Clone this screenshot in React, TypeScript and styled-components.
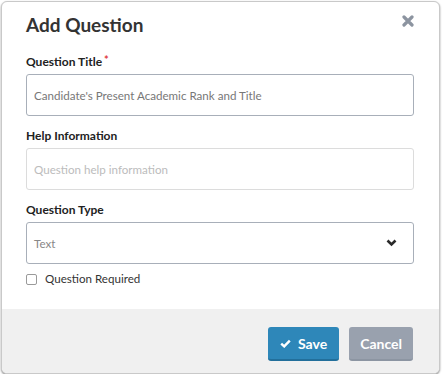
import React from 'react';
import styled, { createGlobalStyle } from 'styled-components';

const GlobalStyle = createGlobalStyle`
  html, body {
    margin: 0;
    padding: 0;
    background: #fff;
  }
  body {
    font-family: Lato, "Liberation Sans", Arial, sans-serif;
    color: #333;
  }
`;

const Dialog = styled.div`
  box-sizing: border-box;
  margin: 1px 0 0 1px;
  width: 439px;
  height: 373px;
  border: 1px solid #c9c9c9;
  border-radius: 6px;
  box-shadow: 0 1px 2px rgba(0, 0, 0, 0.45);
  background: #fff;
  display: flex;
  flex-direction: column;
  overflow: hidden;
`;

const Header = styled.div`
  display: flex;
  justify-content: space-between;
  align-items: flex-start;
  padding: 11px 25px 0 24px;
`;

const Title = styled.h2`
  margin: 0;
  font-size: 19px;
  line-height: 23px;
  font-weight: 700;
  color: #333;
`;

const CloseButton = styled.button`
  border: none;
  background: none;
  padding: 0;
  margin-top: 2px;
  width: 12px;
  height: 12px;
  display: flex;
  cursor: pointer;
`;

const Body = styled.div`
  padding: 18px 25px 0 24px;
  display: flex;
  flex-direction: column;
`;

const Field = styled.div`
  display: flex;
  flex-direction: column;
  margin-bottom: 12px;
`;

const Label = styled.label`
  font-size: 12px;
  line-height: 16px;
  font-weight: 700;
  color: #222;
  margin-bottom: 4px;
`;

const Required = styled.span`
  color: #e0393e;
  font-size: 11px;
  vertical-align: top;
  margin-left: 2px;
  line-height: 12px;
`;

const Input = styled.input<{ $strong?: boolean }>`
  box-sizing: border-box;
  height: 42px;
  width: 100%;
  padding: 0 7px;
  border: 1px solid ${(p) => (p.$strong ? '#a8afb9' : '#dcdcdc')};
  border-radius: 3px;
  font-family: Lato, "Liberation Sans", Arial, sans-serif;
  font-size: 11.6px;
  color: #777;
  outline: none;
  &::placeholder {
    color: #bcbcbc;
  }
`;

const Select = styled.div`
  box-sizing: border-box;
  height: 42px;
  display: flex;
  align-items: center;
  justify-content: space-between;
  padding: 0 16px 0 7px;
  border: 1px solid #a8afb9;
  border-radius: 3px;
  font-size: 11.6px;
  color: #888;
`;

const CheckRow = styled.label`
  display: flex;
  align-items: center;
  gap: 8px;
  margin-top: -5px;
  font-size: 11.6px;
  line-height: 16px;
  color: #333;
`;

const Box = styled.span`
  box-sizing: border-box;
  width: 11px;
  height: 11px;
  border: 1px solid #9a9a9a;
  border-radius: 2px;
  background: #fff;
`;

const Footer = styled.div`
  margin-top: auto;
  background: #f0f0f0;
  display: flex;
  justify-content: flex-end;
  gap: 10px;
  padding: 18px 26px 12px;
`;

const Button = styled.button<{ $primary?: boolean }>`
  box-sizing: border-box;
  height: 34px;
  padding: 0 ${(p) => (p.$primary ? '12px' : '11px')};
  border: none;
  border-bottom: 2px solid ${(p) => (p.$primary ? '#226f9b' : '#8c95a2')};
  border-radius: 3px;
  background: ${(p) => (p.$primary ? '#2e87b9' : '#99a1ae')};
  color: #fff;
  font-family: Lato, "Liberation Sans", Arial, sans-serif;
  font-size: 14px;
  font-weight: 700;
  display: flex;
  align-items: center;
  gap: 7px;
  cursor: pointer;
`;

export default function App() {
  return (
    <>
      <GlobalStyle />
      <Dialog>
        <Header>
          <Title>Add Question</Title>
          <CloseButton aria-label="Close">
            <svg width="12" height="12" viewBox="0 0 12 12">
              <path d="M2 2 L10 10 M10 2 L2 10" stroke="#8c94a0" strokeWidth="3.2" strokeLinecap="round" />
            </svg>
          </CloseButton>
        </Header>
        <Body>
          <Field>
            <Label>
              Question Title<Required>*</Required>
            </Label>
            <Input $strong defaultValue="Candidate's Present Academic Rank and Title" />
          </Field>
          <Field>
            <Label>Help Information</Label>
            <Input placeholder="Question help information" />
          </Field>
          <Field>
            <Label>Question Type</Label>
            <Select>
              <span>Text</span>
              <svg width="11" height="8" viewBox="0 0 11 8">
                <path d="M1.5 1.5 L5.5 5.5 L9.5 1.5" fill="none" stroke="#2b2b2b" strokeWidth="2.6" />
              </svg>
            </Select>
          </Field>
          <CheckRow>
            <Box />
            Question Required
          </CheckRow>
        </Body>
        <Footer>
          <Button $primary>
            <svg width="11" height="9" viewBox="0 0 11 9">
              <path d="M1.2 4.6 L4.2 7.4 L9.8 1.6" fill="none" stroke="#fff" strokeWidth="2.4" />
            </svg>
            Save
          </Button>
          <Button>Cancel</Button>
        </Footer>
      </Dialog>
    </>
  );
}
